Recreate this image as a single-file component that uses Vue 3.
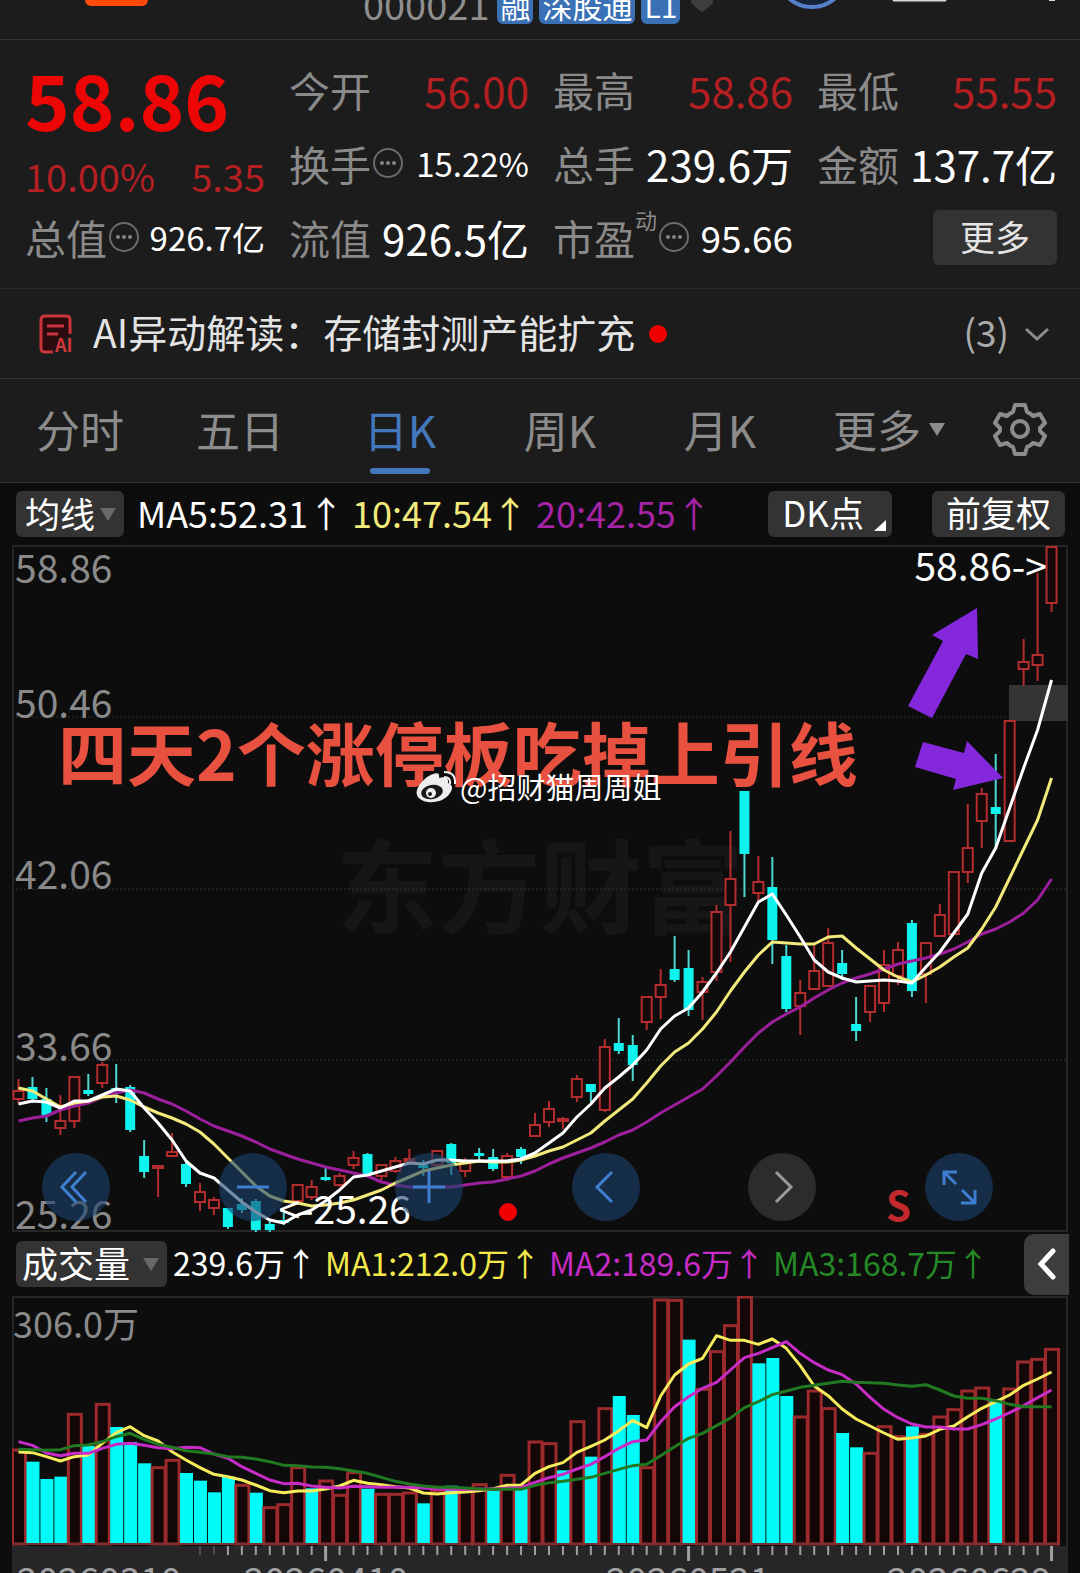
<template>
  <div class="stock-page">
    <header class="top-bar">
      <span class="logo"></span>
      <div class="stock-code">
        <span class="code">000021</span>
        <span class="tag" v-for="tag in tags" :key="tag">{{ tag }}</span>
        <svg class="heart" width="24" height="40" viewBox="0 0 24 40">
          <path d="M1 0h22v3l-9 8q-2 2-4 0L1 3z" fill="#3d3d3d" />
        </svg>
      </div>
      <svg class="top-icons" width="290" height="40" viewBox="0 0 290 40">
        <circle cx="40" cy="-28" r="35" fill="#16213a" stroke="#5580cc" stroke-width="4" />
        <path d="M122 0h51" stroke="#d8d8d8" stroke-width="3" stroke-linecap="round" />
        <path d="M277 0h6" stroke="#d8d8d8" stroke-width="2" />
      </svg>
    </header>

    <section class="quote">
      <div class="price-box">
        <div class="price">58.86</div>
        <div class="change"><span>10.00%</span><span>5.35</span></div>
      </div>
      <div class="cell" v-for="item in quotes" :key="item.label" :class="item.size">
        <span class="label">{{ item.label }}<sup v-if="item.sup">{{ item.sup }}</sup></span>
        <svg v-if="item.info" class="info" width="30" height="30" viewBox="0 0 30 30">
          <circle cx="15" cy="15" r="14" fill="none" stroke="#6c6c6c" stroke-width="2" />
          <circle v-for="n in 3" :key="n" :cx="n * 6 + 3" cy="15" r="2" fill="#858585" />
        </svg>
        <span class="value" :class="{ up: item.up }">{{ item.value }}</span>
      </div>
      <div class="cell end"><button class="more-button">更多</button></div>
    </section>

    <section class="news">
      <svg class="news-icon" width="36" height="40" viewBox="0 0 36 40">
        <path d="M32 20V6q0-4-4-4H7Q3 2 3 6v28q0 4 4 4h8" fill="#2b0b0d" stroke="#c9353a" stroke-width="3" />
        <path d="M9 12h17M9 20h11" stroke="#c9353a" stroke-width="3" />
        <text x="17" y="38" font-size="18" font-weight="bold" fill="#d2373c">AI</text>
      </svg>
      <a class="news-text" href="#">AI异动解读：存储封测产能扩充</a>
      <span class="dot"></span>
      <span class="news-count">(3)</span>
      <svg width="26" height="16" viewBox="0 0 26 16">
        <path d="M2 3l11 10L24 3" fill="none" stroke="#8c8c8c" stroke-width="3" />
      </svg>
    </section>

    <nav class="tabs">
      <button
        v-for="tab in tabs"
        :key="tab"
        class="tab"
        :class="{ active: tab === activeTab }"
        @click="activeTab = tab"
      >
        {{ tab }}
      </button>
      <button class="tab tab-more">更多<span class="caret"></span></button>
      <button class="tab" aria-label="设置">
        <svg width="54" height="54" viewBox="0 0 54 54" fill="none" stroke="#8c8c8c" stroke-width="4">
          <path
            d="M22 3h10l2 7q3 1 6 4l7-2 5 9-5 5v3l5 5-5 9-7-2q-3 3-6 4l-2 7H22l-2-7q-3-1-6-4l-7 2-5-9 5-5v-3l-5-5 5-9 7 2q3-3 6-4z"
            stroke-linejoin="round"
          />
          <circle cx="27" cy="27" r="8" />
        </svg>
      </button>
    </nav>

    <section class="chart-area">
      <div class="ma-bar">
        <label class="picker">
          <select v-model="indicator" aria-label="均线">
            <option>均线</option>
          </select>
          <span class="caret"></span>
        </label>
        <div class="ma-values">
          <span class="ma5">MA5:52.31↑</span>
          <span class="ma10">10:47.54↑</span>
          <span class="ma20">20:42.55↑</span>
        </div>
        <button class="pill dk">DK点<span class="corner"></span></button>
        <button class="pill">前复权</button>
      </div>

      <div class="price-chart">
        <svg viewBox="12 545 1056 687">
          <text class="brand" x="336" y="926">东方财富</text>
          <rect x="13" y="546" width="1054" height="685" fill="none" stroke="#262626" stroke-width="2" />
          <line v-for="y in [717, 889, 1060]" :key="y" class="grid" x1="12" x2="1068" :y1="y" :y2="y" />
          <rect x="1009" y="685" width="59" height="36" fill="#343434" />
          <g v-for="(c, i) in candles" :key="i">
            <line :x1="cx(i)" :x2="cx(i)" :y1="c[3]" :y2="c[1]" :stroke="c[0] ? '#b32d2f' : '#4fd8d2'" stroke-width="2" />
            <line :x1="cx(i)" :x2="cx(i)" :y1="c[2]" :y2="c[4]" :stroke="c[0] ? '#b32d2f' : '#4fd8d2'" stroke-width="2" />
            <rect
              v-if="c[0]"
              :x="cx(i) - 5"
              :y="c[1] + 1"
              width="10"
              :height="c[2] - c[1] - 2"
              fill="#150909"
              stroke="#b32d2f"
              stroke-width="2"
            />
            <rect v-else :x="cx(i) - 5" :y="c[1]" width="10" :height="c[2] - c[1]" fill="#0ff3ee" />
          </g>
          <polyline class="line" :points="points(ma20)" stroke="#9c1f9c" />
          <polyline class="line" :points="points(ma10)" stroke="#f3ea7c" />
          <polyline class="line" :points="points(ma5)" stroke="#ffffff" />
          <g class="scale">
            <text x="15" y="583">58.86</text>
            <text x="15" y="718">50.46</text>
            <text x="15" y="889">42.06</text>
            <text x="15" y="1061">33.66</text>
            <text x="15" y="1229">25.26</text>
          </g>
          <text class="mark" x="1047" y="581">58.86-&gt;</text>
          <text class="mark" x="411" y="1224">&lt;-25.26</text>
          <path d="M977 608l1 51-12-5-34 64-24-12 35-65-11-6z" fill="#8528dc" />
          <path d="M1003 778l-50 12 3-11-41-12 8-25 41 11 3-12z" fill="#8528dc" />
          <text class="headline" x="58" y="781">四天2个涨停板吃掉上引线</text>
          <g>
            <path
              d="M433 774c5-2 7 0 6 4 6-2 10 0 9 5 5 2 5 6 2 10-4 7-14 10-22 9-8-1-13-6-11-12 2-7 10-14 16-16z"
              fill="#eeeeee"
            />
            <ellipse cx="432" cy="792" rx="11" ry="7" fill="#1a1a1a" transform="rotate(-10 432 792)" />
            <circle cx="431" cy="793" r="5" fill="#eeeeee" />
            <circle cx="430" cy="794" r="2" fill="#1a1a1a" />
            <path d="M444 777q7 0 6 7M444 772q12 0 11 12" fill="none" stroke="#eeeeee" stroke-width="2" />
          </g>
          <text class="author" x="460" y="799">@招财猫周周姐</text>
          <circle cx="508" cy="1212" r="9" fill="#f00000" />
          <text class="sell" x="886" y="1221">S</text>
        </svg>
        <div class="chart-tools">
          <button
            v-for="tool in tools"
            :key="tool.name"
            :aria-label="tool.name"
            :class="{ disabled: tool.disabled }"
          >
            <svg width="68" height="68" viewBox="0 0 68 68"><path :d="tool.path" /></svg>
          </button>
        </div>
      </div>

      <div class="volume-bar">
        <label class="picker volume-picker">
          <select v-model="subIndicator" aria-label="副图指标">
            <option>成交量</option>
          </select>
          <span class="caret"></span>
        </label>
        <div class="volume-values">
          <span>239.6万↑</span>
          <span class="v1">MA1:212.0万↑</span>
          <span class="v2">MA2:189.6万↑</span>
          <span class="v3">MA3:168.7万↑</span>
        </div>
        <button class="side-button" aria-label="展开">
          <svg width="20" height="32" viewBox="0 0 20 32">
            <path d="M16 3L4 16l12 13" fill="none" stroke="#fff" stroke-width="5" stroke-linecap="round" />
          </svg>
        </button>
      </div>

      <svg class="volume-chart" viewBox="12 6 1056 277">
        <rect x="12" y="256" width="1056" height="30" fill="#262628" />
        <path d="M13 256V7h1054v249" fill="none" stroke="#262626" stroke-width="2" />
        <g v-for="(v, i) in volumes" :key="i">
          <rect
            v-if="downDays.includes(i)"
            :x="cx(i) - 6"
            :y="v / 3"
            width="13"
            :height="253 - v / 3"
            fill="#00fbf8"
          />
          <rect
            v-else
            :x="cx(i) - 6"
            :y="v / 3 + 1"
            width="13"
            :height="253 - v / 3"
            fill="#130707"
            stroke="#9c2a2c"
            stroke-width="3"
          />
        </g>
        <path d="M12 254h1046" stroke="#7a3032" stroke-width="2" />
        <polyline class="line" :points="points(vol1, 3)" stroke="#f7ec5c" />
        <polyline class="line" :points="points(vol2, 3)" stroke="#c72cc7" />
        <polyline class="line" :points="points(vol3, 3)" stroke="#217a21" />
        <text class="volume-max" x="13" y="48">306.0万</text>
        <line
          v-for="i in 62"
          :key="i"
          :x1="cx(i + 12)"
          :x2="cx(i + 12)"
          y1="256"
          :y2="longTicks.includes(i + 12) ? 271 : 265"
          :stroke-width="longTicks.includes(i + 12) ? 3 : 2"
          :stroke="i < 3 ? '#4c4c4c' : '#a0a0a0'"
        />
        <g class="dates">
          <text x="17" y="304">20260310</text>
          <text x="244" y="304">20260410</text>
          <text x="606" y="304">20260521</text>
          <text x="887" y="304">20260629</text>
        </g>
      </svg>
    </section>
  </div>
</template>

<script setup>
import { ref } from 'vue'

const tags = ['融', '深股通', 'L1']
const tabs = ['分时', '五日', '日K', '周K', '月K']
const activeTab = ref('日K')
const indicator = ref('均线')
const subIndicator = ref('成交量')
const longTicks = [22, 48, 74]

const quotes = [
  { label: '今开', value: '56.00', up: true },
  { label: '最高', value: '58.86', up: true },
  { label: '最低', value: '55.55', up: true },
  { label: '换手', value: '15.22%', info: true, size: 'small' },
  { label: '总手', value: '239.6万' },
  { label: '金额', value: '137.7亿' },
  { label: '总值', value: '926.7亿', info: true, size: 'small' },
  { label: '流值', value: '926.5亿' },
  { label: '市盈', sup: '动', value: '95.66', info: true, size: 'medium' },
]

const tools = [
  { name: '最早', path: 'M34 19L20 34l14 15M44 19L30 34l14 15' },
  { name: '缩小', path: 'M18 34h32' },
  { name: '放大', path: 'M18 34h32M34 18v32' },
  { name: '向左', path: 'M40 19L25 34l15 15' },
  { name: '向右', path: 'M28 19l15 15-15 15', disabled: true },
  { name: '全屏', path: 'M19 32V19h13M19 19l12 12M36 50h14V37M50 50L37 37' },
]

// [up, body top, body bottom, high, low]
const candles = [
  [1, 1090, 1100, 1079, 1103], [0, 1087, 1099, 1077, 1103], [0, 1099, 1115, 1088, 1122],
  [1, 1120, 1129, 1095, 1135], [1, 1076, 1122, 1076, 1128], [0, 1090, 1094, 1074, 1096],
  [1, 1064, 1084, 1062, 1088], [0, 1088, 1091, 1064, 1103], [0, 1087, 1130, 1085, 1132],
  [0, 1156, 1172, 1140, 1178], [1, 1165, 1169, 1165, 1197], [1, 1151, 1157, 1133, 1157],
  [0, 1164, 1184, 1160, 1187], [1, 1191, 1203, 1183, 1211], [1, 1199, 1209, 1197, 1215],
  [0, 1208, 1227, 1208, 1229], [0, 1204, 1210, 1198, 1213], [0, 1201, 1230, 1199, 1233],
  [0, 1224, 1230, 1219, 1233], [0, 1220, 1223, 1213, 1225], [1, 1184, 1202, 1184, 1202],
  [1, 1186, 1198, 1180, 1200], [0, 1177, 1180, 1167, 1181], [1, 1175, 1186, 1173, 1187],
  [1, 1157, 1166, 1151, 1169], [0, 1154, 1174, 1153, 1175], [1, 1164, 1177, 1164, 1180],
  [1, 1160, 1172, 1157, 1173], [1, 1158, 1162, 1149, 1163], [0, 1165, 1168, 1160, 1176],
  [1, 1150, 1166, 1150, 1168], [0, 1144, 1163, 1143, 1175], [1, 1162, 1172, 1158, 1177],
  [0, 1153, 1156, 1148, 1160], [0, 1157, 1169, 1149, 1171], [1, 1155, 1178, 1153, 1181],
  [0, 1149, 1157, 1147, 1164], [1, 1124, 1137, 1113, 1137], [1, 1108, 1123, 1101, 1127],
  [1, 1118, 1122, 1117, 1129], [1, 1078, 1098, 1075, 1102], [0, 1084, 1092, 1084, 1102],
  [1, 1046, 1111, 1039, 1112], [0, 1043, 1051, 1018, 1054], [0, 1045, 1065, 1035, 1081],
  [1, 996, 1023, 996, 1030], [1, 984, 998, 969, 1019], [0, 969, 980, 936, 982],
  [0, 968, 1010, 950, 1016], [1, 981, 993, 977, 1020], [1, 911, 973, 905, 981],
  [1, 878, 906, 831, 962], [0, 791, 854, 791, 897], [1, 881, 894, 856, 902],
  [0, 887, 940, 857, 964], [0, 956, 1009, 945, 1012], [1, 992, 1007, 980, 1035],
  [1, 970, 990, 943, 990], [1, 942, 987, 928, 987], [0, 963, 974, 950, 980],
  [0, 1024, 1031, 997, 1041], [1, 985, 1013, 985, 1022], [1, 964, 1004, 950, 1012],
  [1, 949, 977, 942, 985], [0, 923, 991, 920, 997], [1, 942, 975, 942, 1003],
  [1, 914, 937, 904, 937], [1, 871, 935, 871, 935], [1, 847, 873, 804, 883],
  [1, 793, 822, 788, 848], [0, 807, 814, 754, 848], [1, 720, 842, 720, 842],
  [1, 661, 670, 639, 686], [1, 654, 666, 573, 681], [1, 546, 604, 546, 612],
]

const ma5 = [
  1104, 1101, 1102, 1108, 1101, 1101, 1095, 1089, 1091, 1108, 1123, 1140, 1161, 1173, 1178,
  1190, 1202, 1212, 1220, 1223, 1215, 1210, 1201, 1190, 1177, 1175, 1171, 1167, 1163, 1164,
  1160, 1160, 1161, 1161, 1161, 1161, 1159, 1153, 1143, 1133, 1117, 1104, 1088, 1077, 1065,
  1050, 1029, 1016, 1008, 992, 973, 952, 927, 902, 894, 915, 937, 960, 972, 978,
  982, 981, 980, 981, 983, 967, 952, 933, 914, 873, 848, 808, 768, 730, 680,
]
const ma10 = [
  1088, 1091, 1099, 1107, 1103, 1101, 1097, 1096, 1100, 1107, 1113, 1118, 1124, 1132, 1144,
  1158, 1172, 1186, 1196, 1201, 1203, 1206, 1205, 1203, 1200, 1195, 1190, 1183, 1177, 1171,
  1168, 1165, 1163, 1161, 1162, 1162, 1160, 1156, 1151, 1147, 1140, 1133, 1121, 1110, 1099,
  1083, 1066, 1052, 1043, 1029, 1012, 991, 972, 955, 942, 943, 944, 944, 937, 936,
  948, 959, 970, 977, 982, 975, 967, 957, 948, 929, 907, 878, 849, 820, 778,
]
const ma20 = [
  1121, 1118, 1116, 1110, 1106, 1103, 1097, 1093, 1090, 1093, 1099, 1104, 1111, 1119, 1126,
  1131, 1136, 1142, 1149, 1154, 1159, 1163, 1167, 1170, 1173, 1176, 1182, 1185, 1187, 1187,
  1187, 1187, 1185, 1183, 1182, 1179, 1176, 1171, 1164, 1158, 1153, 1148, 1142, 1135, 1130,
  1122, 1113, 1105, 1097, 1089, 1076, 1062, 1047, 1033, 1022, 1014, 1007, 998, 990, 983,
  978, 974, 969, 964, 961, 958, 954, 949, 942, 934, 929, 922, 913, 900, 879,
]

const volumes = [
  477, 515, 567, 560, 370, 468, 340, 411, 456, 520, 530, 508, 549, 572, 607,
  560, 583, 608, 650, 641, 530, 595, 570, 613, 545, 596, 610, 610, 606, 640,
  600, 587, 600, 581, 602, 553, 596, 453, 458, 541, 392, 500, 353, 318, 375,
  530, 27, 28, 149, 295, 182, 104, 18, 220, 204, 318, 378, 300, 353, 429,
  472, 487, 407, 437, 409, 430, 378, 356, 300, 291, 328, 294, 213, 205, 175,
]
const downDays = [
  1, 2, 3, 5, 7, 8, 9, 12, 13, 14, 15, 17, 21, 25, 29, 31, 34, 36, 39, 41, 43, 44, 48, 53, 54,
  55, 59, 60, 64, 70,
]
const vol1 = [
  486, 488, 500, 513, 500, 495, 460, 428, 410, 437, 453, 485, 510, 533, 553,
  560, 570, 585, 602, 608, 603, 603, 597, 588, 571, 580, 584, 590, 594, 609,
  612, 608, 606, 602, 596, 586, 585, 550, 530, 518, 487, 469, 450, 422, 391,
  413, 318, 255, 222, 205, 137, 151, 151, 163, 147, 175, 227, 288, 317, 357,
  387, 408, 429, 448, 444, 438, 418, 408, 380, 355, 335, 315, 286, 267, 246,
]
const vol2 = [
  455, 466, 489, 497, 490, 490, 475, 463, 460, 466, 473, 476, 472, 473, 492,
  505, 530, 550, 570, 581, 580, 588, 592, 594, 589, 590, 592, 592, 592, 594,
  597, 598, 598, 597, 597, 595, 593, 577, 563, 553, 537, 523, 500, 475, 455,
  450, 395, 350, 320, 295, 277, 240, 203, 190, 173, 155, 190, 218, 240, 254,
  282, 322, 358, 383, 402, 411, 411, 417, 417, 404, 387, 368, 347, 323, 300,
]
const vol3 = [
  478, 479, 481, 479, 467, 465, 455, 440, 430, 448, 463, 472, 482, 487, 492,
  500, 502, 507, 515, 526, 527, 531, 532, 536, 543, 550, 562, 574, 582, 588,
  592, 592, 594, 597, 598, 598, 598, 586, 578, 574, 568, 562, 550, 538, 527,
  523, 497, 470, 445, 430, 407, 384, 353, 335, 314, 303, 292, 286, 280, 274,
  277, 278, 280, 285, 289, 284, 300, 318, 325, 325, 332, 343, 350, 350, 350,
]

function cx(i) {
  return 18.5 + i * 13.96
}

function points(list, ratio = 1) {
  return list.map((y, i) => `${cx(i)},${y / ratio}`).join(' ')
}
</script>

<style>
body {
  margin: 0;
  background: #1c1c1c;
}
</style>

<style scoped>
.stock-page {
  background: #1c1c1c;
  color: #fff;
  font-family: 'Noto Sans CJK SC', sans-serif;
  overflow: hidden;
}

button,
select {
  border: none;
  padding: 0;
  background: none;
  color: inherit;
  font-family: inherit;
  cursor: pointer;
}

svg {
  display: block;
  flex-shrink: 0;
}

.top-bar {
  box-sizing: border-box;
  display: flex;
  height: 40px;
  padding: 0 18px 0 85px;
  border-bottom: 1px solid #343434;
  overflow: hidden;
}

.logo {
  width: 63px;
  height: 6px;
  border-radius: 0 0 12px 12px;
  background: #ff4a0c;
}

.stock-code {
  display: flex;
  align-items: flex-end;
  gap: 6px;
  height: 24px;
  margin-left: 22%;
}

.code {
  margin-right: 2px;
  color: #8f8f8f;
  font-size: 38px;
  line-height: 40px;
}

.tag {
  padding: 0 3px;
  border-radius: 6px;
  background: #3a70b4;
  font-size: 30px;
  line-height: 38px;
}

.heart {
  align-self: flex-start;
  margin-left: 4px;
}

.top-icons {
  margin-left: auto;
}

.quote {
  display: grid;
  grid-template-columns: repeat(4, 1fr);
  grid-auto-rows: 74px;
  column-gap: 24px;
  padding: 12px 23px 14px 25px;
}

.price-box {
  grid-row: span 2;
}

.price {
  height: 98px;
  color: #ec0606;
  font-size: 76px;
  font-weight: bold;
  line-height: 92px;
}

.change {
  display: flex;
  justify-content: space-between;
  color: #b51f22;
  font-size: 38px;
  line-height: 52px;
}

.cell {
  display: flex;
  align-items: center;
  font-size: 42px;
  white-space: nowrap;
}

.label {
  position: relative;
  color: #8a8a8a;
  font-size: 41px;
}

.label sup {
  position: absolute;
  left: 100%;
  top: -4px;
  font-size: 22px;
}

.info {
  margin-left: 2px;
}

.value {
  margin-left: auto;
}

.value.up {
  color: #b51f22;
}

.small .value {
  font-size: 33px;
}

.medium .value {
  font-size: 37px;
}

.medium .info {
  margin-left: 24px;
}

.end {
  justify-content: flex-end;
}

.more-button {
  width: 124px;
  height: 55px;
  padding-bottom: 4px;
  border-radius: 6px;
  background: #333;
  color: #e4e4e4;
  font-size: 35px;
}

.news {
  box-sizing: border-box;
  display: flex;
  align-items: center;
  height: 90px;
  padding: 0 30px 0 38px;
  border-top: 1px solid #2b2b2b;
}

.news-text {
  margin-left: 19px;
  padding-bottom: 5px;
  color: #e4e4e4;
  font-size: 39px;
  text-decoration: none;
  white-space: nowrap;
}

.dot {
  width: 18px;
  height: 18px;
  margin-left: 14px;
  border-radius: 50%;
  background: #f00000;
}

.news-count {
  margin: 0 15px 0 auto;
  padding-bottom: 5px;
  color: #ababab;
  font-size: 37px;
}

.tabs {
  box-sizing: border-box;
  display: grid;
  grid-template-columns: repeat(6, 4fr) 3fr;
  height: 104px;
  border-top: 1px solid #343434;
}

.tab {
  position: relative;
  display: flex;
  align-items: center;
  justify-content: center;
  padding-bottom: 3px;
  color: #8c8c8c;
  font-size: 44px;
}

.tab.active {
  color: #4378bd;
}

.tab.active::after {
  content: '';
  position: absolute;
  left: calc(50% - 30px);
  bottom: 8px;
  width: 60px;
  height: 6px;
  border-radius: 3px;
  background: #4378bd;
}

.tab-more {
  gap: 8px;
  padding-left: 18px;
}

.caret {
  border: 8px solid transparent;
  border-top: 13px solid #8c8c8c;
  border-bottom: none;
}

.chart-area {
  border-top: 1px solid #343434;
  background: #0d0d0d;
}

.ma-bar {
  display: flex;
  align-items: center;
  height: 62px;
  padding: 0 15px 0 16px;
}

.picker {
  position: relative;
  display: flex;
  align-items: center;
  flex-shrink: 0;
  width: 108px;
  height: 46px;
  border-radius: 6px;
  background: #333;
}

.picker select {
  flex-shrink: 0;
  width: 100%;
  height: 60px;
  margin-top: -4px;
  padding-left: 9px;
  appearance: none;
  color: #fff;
  font-size: 35px;
}

.picker .caret {
  position: absolute;
  right: 8px;
  border-top-color: #696969;
  pointer-events: none;
}

.ma-values {
  display: flex;
  gap: 8px;
  margin-left: 13px;
  padding-bottom: 5px;
  font-size: 36px;
  white-space: nowrap;
}

.ma10 {
  color: #f3ea7c;
}

.ma20 {
  color: #a623a6;
}

.pill {
  height: 46px;
  padding: 0 14px 4px;
  border-radius: 6px;
  background: #333;
  color: #fff;
  font-size: 35px;
  line-height: 42px;
  white-space: nowrap;
}

.dk {
  position: relative;
  margin: 0 40px 0 auto;
  padding-right: 28px;
}

.corner {
  position: absolute;
  right: 6px;
  bottom: 6px;
  border-left: 12px solid transparent;
  border-bottom: 11px solid #fff;
}

.price-chart {
  position: relative;
  margin: 0 12px;
}

.price-chart > svg,
.volume-chart {
  width: 100%;
}

.grid {
  stroke: #333;
  stroke-dasharray: 2 2;
}

.line {
  fill: none;
  stroke-width: 3;
  stroke-linejoin: round;
}

.scale {
  fill: #8a8a8a;
  font-size: 39px;
}

.volume-max {
  fill: #8a8a8a;
  font-size: 36px;
}

.mark {
  fill: #fff;
  font-size: 39px;
  text-anchor: end;
}

.brand {
  fill: #161616;
  font-size: 102px;
  font-weight: bold;
}

.headline {
  fill: #e8513f;
  font-size: 69px;
  font-weight: bold;
}

.author {
  fill: #fff;
  font-size: 29px;
}

.sell {
  fill: #c4292e;
  font-size: 40px;
  font-weight: bold;
}

.chart-tools {
  position: absolute;
  left: 30px;
  right: 75px;
  bottom: 11px;
  display: flex;
  justify-content: space-between;
}

.chart-tools button {
  border-radius: 50%;
  background: rgba(29, 67, 112, 0.6);
}

.chart-tools path {
  fill: none;
  stroke: #3e7fd0;
  stroke-width: 3;
}

.chart-tools .disabled {
  background: #2c2c2c;
}

.chart-tools .disabled path {
  stroke: #9a9a9a;
}

.volume-bar {
  display: flex;
  align-items: center;
  height: 64px;
  padding: 0 11px 0 16px;
}

.volume-picker {
  width: 151px;
}

.volume-picker select {
  padding-left: 6px;
  font-size: 36px;
}

.volume-values {
  display: flex;
  gap: 8px;
  margin-left: 6px;
  padding-bottom: 4px;
  font-size: 32px;
  white-space: nowrap;
}

.v1 {
  color: #f3e94a;
}

.v2 {
  color: #c72cc7;
}

.v3 {
  color: #258a25;
}

.side-button {
  display: flex;
  align-items: center;
  justify-content: center;
  width: 45px;
  height: 61px;
  margin-left: auto;
  border-radius: 10px 0 0 10px;
  background: #3d3d3d;
}

.volume-chart {
  box-sizing: border-box;
  padding: 0 12px;
}

.dates {
  fill: #a0a0a0;
  font-size: 37px;
}
</style>
